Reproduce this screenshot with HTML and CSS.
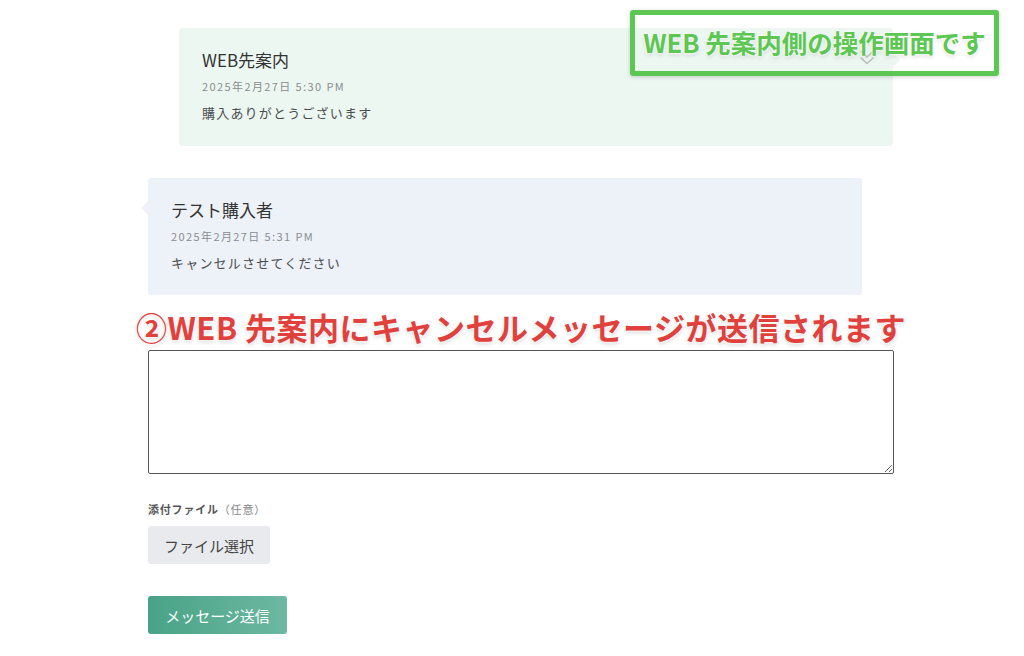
FILE: index.html
```html
<!DOCTYPE html>
<html lang="ja">
<head>
<meta charset="utf-8">
<link rel="stylesheet" href="styles.css">
</head>
<body>
<div class="page">
  <div class="thread">
    <div class="bubble bubble-shop">
      <div class="name">WEB先案内</div>
      <div class="date">2025年2月27日 5:30 PM</div>
      <div class="msg">購入ありがとうございます</div>
      <svg class="read-icon" width="18" height="20" viewBox="0 0 18 20" fill="none" stroke="#b9bdbb" stroke-width="1.6" stroke-linecap="round" stroke-linejoin="round"><path d="M3 3.5l6 5.5 6-5.5"/><path d="M3 10l6 5.5 6-5.5"/></svg>
    </div>
    <div class="bubble bubble-buyer">
      <div class="name">テスト購入者</div>
      <div class="date">2025年2月27日 5:31 PM</div>
      <div class="msg">キャンセルさせてください</div>
    </div>
  </div>
  <form class="form">
    <textarea class="input"></textarea>
    <div class="label">添付ファイル<span class="opt">（任意）</span></div>
    <button type="button" class="file-btn">ファイル選択</button>
    <button type="button" class="send-btn">メッセージ送信</button>
  </form>
  <div class="note-green">WEB 先案内側の操作画面です</div>
  <div class="note-red">②WEB 先案内にキャンセルメッセージが送信されます</div>
</div>
</body>
</html>
```
FILE: styles.css
```css
html, body {
  margin: 0;
  padding: 0;
  background: #ffffff;
}
body {
  font-family: "Noto Sans CJK JP", "Noto Sans", sans-serif;
  color: #333;
}
.page {
  position: relative;
  width: 1024px;
  height: 656px;
  overflow: hidden;
}
.thread {
  display: flex;
  flex-direction: column;
  gap: 32px;
  width: 745px;
  margin-left: 148px;
  padding-top: 28px;
}
.bubble {
  position: relative;
  box-sizing: border-box;
  width: 714px;
  height: 118px;
  border-radius: 3px;
  padding: 20px 23px 0;
}
.bubble-shop {
  background: #edf7f1;
  align-self: flex-end;
}
.bubble-buyer {
  background: #edf1f8;
  height: 117px;
}
.bubble-shop::after {
  content: "";
  position: absolute;
  right: -7px;
  top: 25px;
  border-top: 7px solid transparent;
  border-bottom: 7px solid transparent;
  border-left: 7px solid #edf7f1;
}
.bubble-buyer::before {
  content: "";
  position: absolute;
  left: -7px;
  top: 23px;
  border-top: 7px solid transparent;
  border-bottom: 7px solid transparent;
  border-right: 7px solid #edf1f8;
}
.name {
  font-size: 17px;
  line-height: 24px;
  color: #333;
}
.date {
  margin-top: 7px;
  font-size: 11px;
  line-height: 14px;
  letter-spacing: 1.4px;
  color: #8a8d90;
}
.msg {
  margin-top: 11px;
  font-size: 13px;
  line-height: 18px;
  letter-spacing: 1.2px;
  color: #4a4d50;
}
.read-icon {
  position: absolute;
  right: 17px;
  top: 20px;
}
.form {
  display: flex;
  flex-direction: column;
  align-items: flex-start;
  margin-left: 148px;
  padding-top: 55px;
}
.input {
  box-sizing: border-box;
  width: 746px;
  height: 124px;
  border: 1px solid #555;
  border-radius: 2px;
  margin: 0;
  resize: vertical;
  font-family: inherit;
}
.label {
  margin-top: 27px;
  font-size: 11px;
  line-height: 16px;
  font-weight: bold;
  letter-spacing: 0.8px;
  color: #555;
}
.opt {
  font-weight: normal;
  color: #888;
}
.file-btn {
  margin-top: 9px;
  height: 38px;
  padding: 0 16px;
  border: none;
  border-radius: 3px;
  background: #e9eaee;
  font-family: inherit;
  font-size: 15px;
  color: #444;
}
.send-btn {
  margin-top: 32px;
  height: 38px;
  width: 139px;
  padding: 0;
  border: none;
  border-radius: 3px;
  background: linear-gradient(90deg, #48a386, #6db8a1);
  font-family: inherit;
  font-size: 15px;
  color: #fff;
}
.note-green {
  position: absolute;
  left: 630px;
  top: 10px;
  box-sizing: border-box;
  width: 369px;
  height: 66px;
  padding-bottom: 3px;
  border: 5px solid #5cc752;
  border-radius: 3px;
  box-shadow: 0 1px 4px rgba(0,0,0,0.18);
  display: flex;
  align-items: center;
  justify-content: center;
  font-size: 25.5px;
  font-weight: bold;
  color: #5cc752;
  white-space: nowrap;
  text-shadow: 0 0 3px #fff, 0 0 3px #fff, 0 2px 4px rgba(0,0,0,0.15);
}
.note-red {
  position: absolute;
  left: 136px;
  top: 306px;
  font-size: 31px;
  line-height: 42px;
  font-weight: bold;
  letter-spacing: 0.5px;
  color: #e0413c;
  white-space: nowrap;
  text-shadow: 0 0 3px #fff, 0 0 3px #fff, 0 2px 4px rgba(0,0,0,0.18);
}
```
